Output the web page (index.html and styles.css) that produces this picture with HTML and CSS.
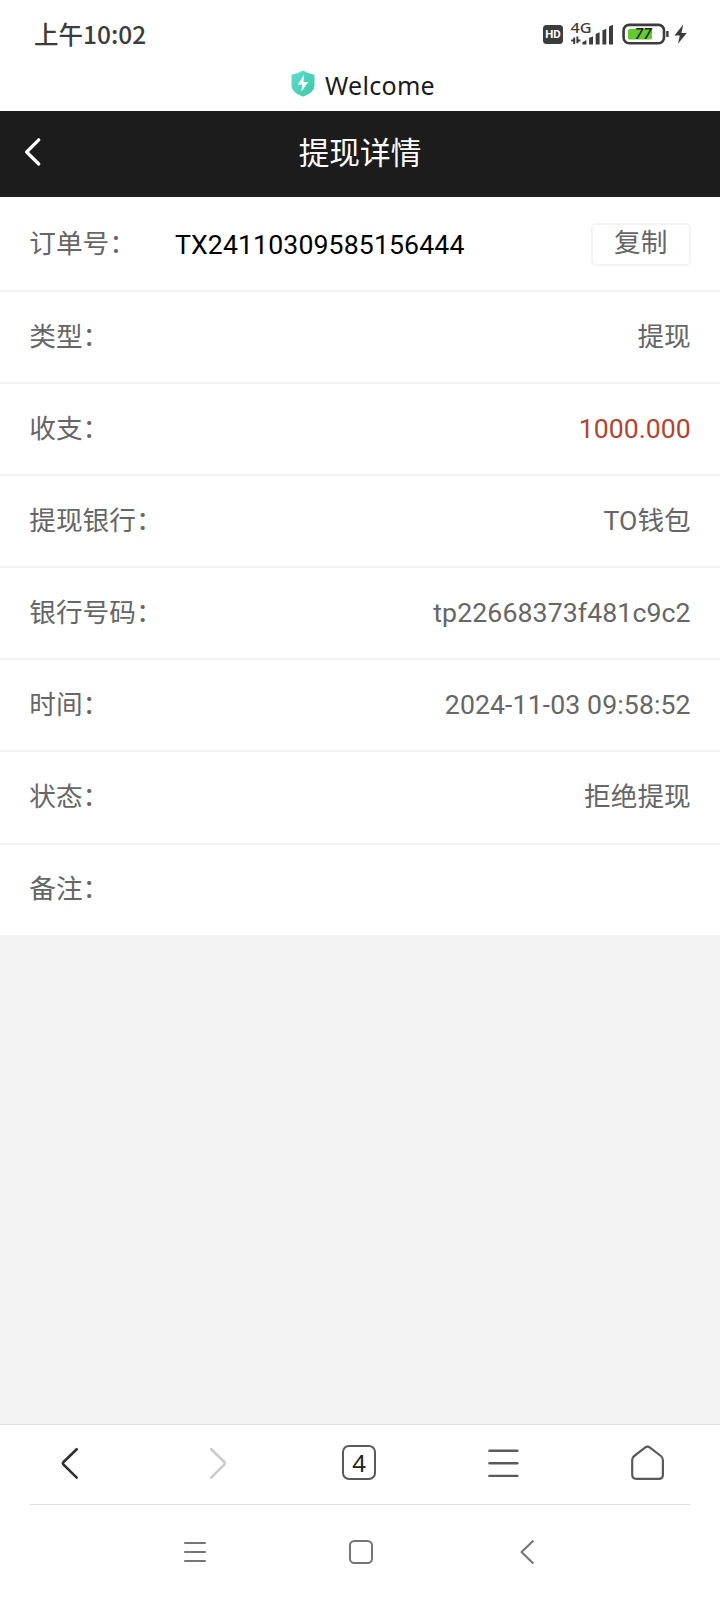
FILE: index.html
```html
<!DOCTYPE html>
<html lang="zh-CN">
<head>
    <meta charset="UTF-8">
    <meta name="viewport" content="width=device-width, initial-scale=1.0">
    <title>提现详情</title>
    <link rel="stylesheet" href="styles.css">
</head>
<body>
    <div class="page">
        <div class="status-bar">
            <span class="time">上午<span class="clock">10:02</span></span>
            <svg class="status-icons" width="152" height="44" viewBox="0 -8 152 44">
                <!-- HD -->
                <rect x="3" y="5" width="20" height="19" rx="3.5" fill="#3c3c3c"/>
                <text class="hd" x="13" y="18.2" text-anchor="middle" textLength="15.5" lengthAdjust="spacingAndGlyphs">HD</text>
                <!-- 4G + signal -->
                <text class="net" x="30.5" y="13.3" textLength="21" lengthAdjust="spacingAndGlyphs">4G</text>
                <path d="M34.2 17.5v6.6M31.2 20.4h3M37.4 16.6v6.6M37.4 20.6h3" stroke="#3c3c3c" stroke-width="2" fill="none"/>
                <g fill="#3c3c3c">
                    <path d="M42.4 24.5V22.2l4-2.2v4.5z"/>
                    <path d="M49.1 24.5V18l3.9-1.8v8.3z"/>
                    <path d="M55.7 24.5V14l3.9-1.8v12.3z"/>
                    <path d="M62.4 24.5V10.5l3.9-1.8v15.8z"/>
                    <path d="M69 24.5V6.6l4-1.8v19.7z"/>
                </g>
                <!-- battery -->
                <rect x="83.6" y="4.9" width="40.4" height="18.4" rx="5.5" fill="none" stroke="#3c3c3c" stroke-width="2.6"/>
                <rect x="88" y="9" width="24" height="10.4" rx="1.5" fill="#62c92f"/>
                <path d="M127.4 11v6" stroke="#3c3c3c" stroke-width="2.4"/>
                <text class="battery" x="103.3" y="19.2" text-anchor="middle" textLength="17" lengthAdjust="spacingAndGlyphs">77</text>
                <path d="M143.3 4.5L134.4 15.4h5.4l-1.8 8.4 8.8-10.9h-5.4z" fill="#3c3c3c"/>
            </svg>
        </div>

        <div class="site-title">
            <svg width="24" height="27" viewBox="0 0 24 27">
                <defs>
                    <linearGradient id="shield" x1="0" y1="0" x2="1" y2="1">
                        <stop offset="0" stop-color="#5fdcd2"/>
                        <stop offset="1" stop-color="#3cc9a0"/>
                    </linearGradient>
                </defs>
                <path d="M12 .5Q17 3.7 23.5 4.8V16Q23.3 22.5 12 26.7Q.7 22.5 .5 16V4.8Q7 3.7 12 .5Z" fill="url(#shield)"/>
                <path d="M12.9 5L6.8 14.8h4.4l-.9 6.9 7-9.6h-4.7z" fill="#fff"/>
            </svg>
            <span>Welcome</span>
        </div>

        <div class="header">
            <svg class="header-back" width="20" height="30" viewBox="0 0 20 30">
                <path d="M16.8 2.8L4.6 15l12.2 12" fill="none" stroke="#fff" stroke-width="3.2" stroke-linecap="round" stroke-linejoin="round"/>
            </svg>
            <h1>提现详情</h1>
        </div>

        <div class="detail-list">
            <div class="row row-order">
                <span class="label">订单号：</span>
                <span class="order-no">TX24110309585156444</span>
                <button class="copy-button">复制</button>
            </div>
            <div class="row">
                <span class="label">类型：</span>
                <span class="value">提现</span>
            </div>
            <div class="row">
                <span class="label">收支：</span>
                <span class="value amount">1000.000</span>
            </div>
            <div class="row">
                <span class="label">提现银行：</span>
                <span class="value">TO钱包</span>
            </div>
            <div class="row">
                <span class="label">银行号码：</span>
                <span class="value number">tp22668373f481c9c2</span>
            </div>
            <div class="row">
                <span class="label">时间：</span>
                <span class="value number">2024-11-03 09:58:52</span>
            </div>
            <div class="row">
                <span class="label">状态：</span>
                <span class="value">拒绝提现</span>
            </div>
            <div class="row">
                <span class="label">备注：</span>
            </div>
        </div>

        <div class="bottom">
            <div class="browser-bar">
                <svg width="36" height="36" viewBox="0 0 36 36" fill="none" stroke="#2e2e2e" stroke-width="2.6" stroke-linecap="round" stroke-linejoin="round">
                    <path d="M24.7 4.2L11.3 17.3Q10.4 18.3 11.3 19.3L24.7 32.6"/>
                </svg>
                <svg width="36" height="36" viewBox="0 0 36 36" fill="none" stroke="#cbcbcb" stroke-width="2.6" stroke-linecap="round" stroke-linejoin="round">
                    <path d="M14.2 4.2L27.5 17.3Q28.4 18.3 27.5 19.3L14.2 32.6"/>
                </svg>
                <span class="tabs">4</span>
                <svg width="36" height="36" viewBox="0 0 36 36" fill="none" stroke="#5a5a5a" stroke-width="2.4" stroke-linecap="round">
                    <path d="M4.4 5.7h28M4.4 18.3h28M4.4 30.9h28"/>
                </svg>
                <svg width="36" height="36" viewBox="0 0 36 36" fill="none" stroke="#5a5a5a" stroke-width="2.2" stroke-linejoin="round">
                    <path d="M2.2 15Q2.2 12.5 4.2 11L15 2.6Q17.5 .6 20 2.6L30.9 11Q32.9 12.5 32.9 15V29.5Q32.9 33.9 28.9 33.9H6.2Q2.2 33.9 2.2 29.5Z"/>
                </svg>
            </div>
            <div class="system-bar">
                <svg width="26" height="26" viewBox="0 0 26 26" fill="none" stroke="#757575" stroke-width="2" stroke-linecap="round">
                    <path d="M3 4h20M3 13h20M3 22h20"/>
                </svg>
                <svg width="26" height="26" viewBox="0 0 26 26" fill="none" stroke="#757575" stroke-width="2">
                    <rect x="2" y="2" width="22" height="22" rx="4.5"/>
                </svg>
                <svg width="26" height="26" viewBox="0 0 26 26" fill="none" stroke="#757575" stroke-width="2.1" stroke-linecap="round" stroke-linejoin="round">
                    <path d="M18.8 2.2L7.5 13l11.3 11"/>
                </svg>
            </div>
        </div>
    </div>
</body>
</html>
```

FILE: styles.css
```css
* {
    margin: 0;
    padding: 0;
    box-sizing: border-box;
}

body {
    font-family: Roboto, 'Noto Sans CJK SC', sans-serif;
    background: #f3f3f3;
    color: #666;
}

svg {
    display: block;
    flex: none;
}

.page {
    width: 720px;
    height: 1600px;
    display: flex;
    flex-direction: column;
}

.status-bar {
    height: 66px;
    background: #fff;
    display: flex;
    justify-content: space-between;
    padding: 12px 28px 0 34px;
}

.time {
    margin-top: 7px;
    font-family: 'Noto Sans CJK SC', sans-serif;
    font-size: 24.5px;
    font-weight: 500;
    line-height: 30px;
    color: #3c3c3c;
}

.hd {
    font: 700 11px Roboto, sans-serif;
    fill: #fff;
}

.net {
    font: 500 15px 'Noto Sans', sans-serif;
    fill: #3c3c3c;
}

.battery {
    font: italic 500 14px Roboto, sans-serif;
    fill: #222;
}

.site-title {
    height: 45px;
    background: #fff;
    display: flex;
    justify-content: center;
    gap: 10px;
    padding: 4px 0 0 6px;
}

.site-title span {
    font-family: 'Noto Sans', sans-serif;
    font-size: 25px;
    line-height: 31px;
    letter-spacing: 0.3px;
    color: #1a1a1a;
}

.header {
    height: 86px;
    background: #1c1c1c;
    color: #fff;
    display: flex;
    align-items: center;
    padding: 0 22px;
}

.header-back {
    margin-top: -5px;
}

.header h1 {
    flex: 1;
    margin-right: 20px;
    padding-bottom: 8px;
    text-align: center;
    font-size: 30.67px;
    font-weight: 400;
}

.detail-list {
    background: #fff;
}

.row {
    height: 92.1px;
    border-bottom: 2px solid #f3f3f3;
    padding: 0 29.3px 1px;
    display: flex;
    justify-content: space-between;
    align-items: center;
    font-size: 26.67px;
    line-height: 40px;
}

.row-order {
    height: 95px;
    padding-bottom: 0;
    justify-content: flex-start;
}

.row:last-child {
    height: 90px;
    border-bottom: none;
}

.order-no {
    margin: 2px 0 0 39px;
    letter-spacing: 0.12px;
    color: #000;
}

.number {
    letter-spacing: 0.1px;
}

.amount {
    color: #b5432f;
}

.copy-button {
    width: 100px;
    height: 43px;
    margin: 2px 0 0 auto;
    border: 2px solid #f3f3f3;
    border-radius: 5px;
    background: #fff;
    color: #666;
    font-family: inherit;
    font-size: 26.67px;
    line-height: 36px;
    padding-bottom: 3px;
}

.bottom {
    height: 176px;
    margin-top: auto;
    background: #fff;
    border-top: 1px solid #dfdfdf;
}

.browser-bar {
    height: 80px;
    margin: 0 30px;
    padding: 0 24px 4px 22px;
    border-bottom: 1px solid #e0e0e0;
    display: flex;
    justify-content: space-between;
    align-items: center;
}

.tabs {
    width: 34px;
    height: 35px;
    border: 2px solid #5a5a5a;
    border-radius: 7px;
    color: #222;
    font-family: 'Noto Sans', sans-serif;
    font-size: 24px;
    line-height: 31px;
    text-align: center;
}

.system-bar {
    display: flex;
    justify-content: space-between;
    padding: 34px 180px 0 182px;
}
```
